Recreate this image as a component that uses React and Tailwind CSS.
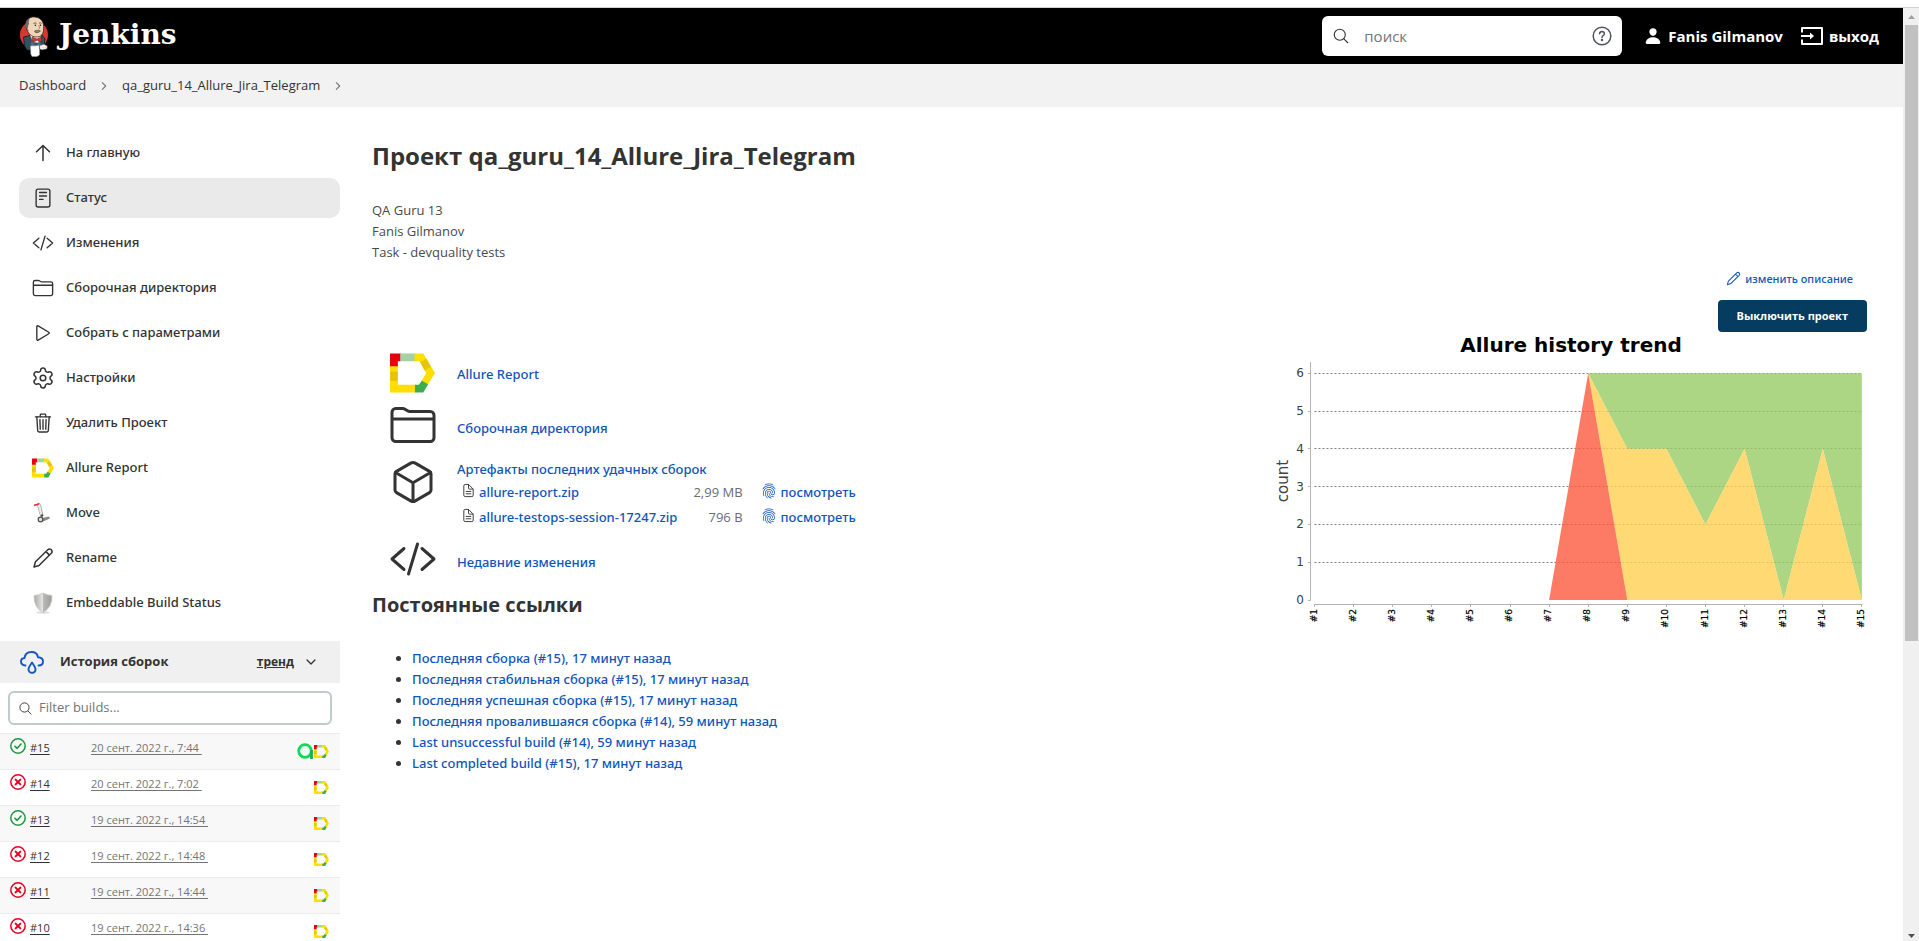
import React from 'react';
import {
  IoReaderOutline,
  IoCodeSlashOutline,
  IoFolderOutline,
  IoPlayOutline,
  IoTrashOutline,
  IoSearchOutline,
  IoCubeOutline,
  IoDocumentTextOutline,
  IoFingerPrintOutline,
  IoPerson,
  IoChevronForwardOutline,
  IoChevronDownOutline,
} from 'react-icons/io5';

function JenkinsLogo() {
  return (
    <svg viewBox="0 0 30 41" className="h-[41px] w-[30px]" aria-hidden="true">
      <circle cx="15" cy="19" r="14" fill="#d33833" />
      <path d="M4.500 21 L11 19.500 L23 19 L26 23 L25 30 L21 34 L8 34 L5.500 30 Z" fill="#335061" stroke="#161616" strokeWidth="0.800" />
      <path d="M11 19 L14 26 L20 27 L22 19 Z" fill="#fff" />
      <path d="M13 23 L16 28 L11 32 Z M20 24 L18 30 L23 31 Z" fill="#49728b" />
      <path d="M7.500 8 C7 3.500 11 0.800 15 0.900 C20 1 24 4 24.500 9 C25 14 24.500 19 20.500 20.500 C16 22 11 20 9.500 16.500 C8 15 6.800 12 7.500 8 Z" fill="#efd6b8" stroke="#30241c" strokeWidth="0.800" />
      <path d="M7.300 12 C5.800 8 6.500 3.500 11.500 1.400 C9.800 3.500 9.600 5.500 10 8 C8.800 9 9.400 11 8.600 13 Z" fill="#6d6b6d" />
      <path d="M8.800 11 C7.300 11.300 8 14.500 9.700 14.300" fill="#efd6b8" stroke="#30241c" strokeWidth="0.600" />
      <path d="M14.500 7.500 Q16 6.200 17.500 7.400 M20 7.200 Q21.500 6.200 22.500 7.500" fill="none" stroke="#30241c" strokeWidth="0.700" />
      <circle cx="16.400" cy="9.300" r="0.800" fill="#161616" />
      <circle cx="21.400" cy="9.300" r="0.800" fill="#161616" />
      <path d="M19.500 9.500 Q22 12.500 19.500 13.200" fill="none" stroke="#a06f54" strokeWidth="0.800" />
      <path d="M15.500 15 Q18.500 13.600 21.500 15 Q20 17 16.500 16.600 Z" fill="#8c8880" stroke="#30241c" strokeWidth="0.500" />
      <path d="M13 21 L18 23 L22.500 20.800 L22.500 26 L18 24.200 L14 26.500 Z" fill="#d33833" stroke="#6b120f" strokeWidth="0.500" />
      <path d="M11.500 30 L20.500 29.500 L20.500 39 L18 40.500 L13 40.500 L11.800 38 Z" fill="#fff" stroke="#9a9a9a" strokeWidth="0.500" />
      <path d="M20.500 29.500 L25 28 L28.500 30 L28 33 L23 34 L20.500 33 Z" fill="#f4efe8" stroke="#30241c" strokeWidth="0.500" />
    </svg>
  );
}

function AllureIcon({ className }) {
  return (
    <svg viewBox="0 0 46 40" className={className} aria-hidden="true">
      <path d="M0 12 H8 V32 H26 V40 H0 Z" fill="#ffde00" />
      <path d="M0 18.500 H8 V28 H0 Z" fill="#e5c40d" />
      <path d="M0 0 H11 V8 H8 V13 H0 Z" fill="#e8000e" />
      <path d="M10.500 0 H26 V8 H10.500 Z" fill="#a5d2a5" />
      <path d="M25 0 H34 L46 20 L38.500 32 L32 28.500 L37 20 L30 8 H25 Z" fill="#ffde00" />
      <path d="M31 9 L37 5.200 L42 13.500 L35.500 17.500 Z" fill="#e5c40d" />
      <path d="M25.500 32 H29.500 L32.500 28 L39 31.500 L34 40 H25.500 Z" fill="#3dac4b" />
    </svg>
  );
}

function ArrowUpIcon({ className }) {
  return (
    <svg viewBox="0 0 22 22" className={className} fill="none" stroke="currentColor" strokeWidth="1.500" strokeLinejoin="round" strokeLinecap="round" aria-hidden="true">
      <path d="M4.500 9.800 L11 3.500 L17.500 9.800 M11 3.800 V18.500" />
    </svg>
  );
}

function GearIcon({ className }) {
  return (
    <svg viewBox="1 1 22 22" className={className} fill="none" stroke="currentColor" strokeWidth="1.500" strokeLinejoin="round" strokeLinecap="round" aria-hidden="true">
      <path d="M9.671 4.136a2.34 2.34 0 0 1 4.659 0 2.34 2.34 0 0 0 3.319 1.915 2.34 2.34 0 0 1 2.33 4.033 2.34 2.34 0 0 0 0 3.831 2.34 2.34 0 0 1-2.33 4.033 2.34 2.34 0 0 0-3.319 1.915 2.34 2.34 0 0 1-4.659 0 2.34 2.34 0 0 0-3.32-1.915 2.34 2.34 0 0 1-2.33-4.033 2.34 2.34 0 0 0 0-3.831A2.34 2.34 0 0 1 6.35 6.051a2.34 2.34 0 0 0 3.319-1.915" />
      <circle cx="12" cy="12" r="2.800" />
    </svg>
  );
}

function PencilIcon({ className }) {
  return (
    <svg viewBox="0 0 22 22" className={className} fill="none" stroke="currentColor" strokeWidth="1.500" strokeLinejoin="round" strokeLinecap="round" aria-hidden="true">
      <path d="M2 20 L3.500 14.800 L15.800 2.800 Q17.500 1.200 19.300 2.800 Q20.900 4.600 19.300 6.300 L7 18.500 Z M14 4.600 L17.500 8.100" />
    </svg>
  );
}

function MoveIcon({ className }) {
  return (
    <svg viewBox="0 0 22 22" className={className} fill="none" aria-hidden="true">
      <path d="M5.500 3 L9.500 17 M8.500 2.500 L11 14" stroke="#9b9b98" strokeWidth="0.900" />
      <path d="M6.500 3 L10 15" stroke="#e9e9e6" strokeWidth="1.500" />
      <path d="M2 3.500 L4.500 2.500 M4 3 L7.500 1.500" stroke="#d9313d" strokeWidth="1.600" />
      <path d="M10 16 L17 14.500 L18 16.500 L11 19.500 Z" fill="#8b8b84" />
      <circle cx="8.500" cy="17.500" r="2.300" fill="#e2e2dd" stroke="#4b4b48" strokeWidth="1.200" />
      <circle cx="10" cy="13.500" r="1.200" fill="#4b4b48" />
    </svg>
  );
}

function ShieldIcon({ className }) {
  return (
    <svg viewBox="0 0 22 22" className={className} aria-hidden="true">
      <defs>
        <linearGradient id="shieldFill" x1="0" x2="1">
          <stop offset="0" stopColor="#a8aaa5" />
          <stop offset="0.480" stopColor="#e4e5e2" />
          <stop offset="0.520" stopColor="#b9bab6" />
          <stop offset="1" stopColor="#9a9c97" />
        </linearGradient>
      </defs>
      <ellipse cx="11" cy="20.500" rx="7" ry="1.200" fill="#dddddb" />
      <path d="M11 1 Q15.500 3.200 20 3.500 Q20.500 15 11 20.800 Q1.500 15 2 3.500 Q6.500 3.200 11 1 Z" fill="url(#shieldFill)" stroke="#c9cac7" strokeWidth="0.800" />
    </svg>
  );
}

function CloudIcon() {
  return (
    <svg viewBox="0 0 24 24" className="h-6 w-6" fill="none" stroke="#1457c4" strokeWidth="1.900" strokeLinecap="round" strokeLinejoin="round" aria-hidden="true">
      <path d="M5.500 15.500 C2.500 15.300 1 13.500 1 11.600 C1 9.600 2.500 8.200 4.600 8 C5 4 8 2 11.500 2 C14.800 2 17.400 4 18 7.200 C21 7.400 23 9 23 11.500 C23 14 21.200 15.500 18.500 15.500" />
      <path d="M12 12.500 C14 15.500 15.500 17.500 15.500 19.300 C15.500 21.400 14 22.800 12 22.800 C10 22.800 8.500 21.400 8.500 19.300 C8.500 17.500 10 15.500 12 12.500 Z" />
    </svg>
  );
}

function StatusIcon({ ok }) {
  return (
    <svg viewBox="0 0 16 16" className="h-4 w-4 shrink-0" fill="none" stroke={ok ? '#1e9641' : '#e2001f'} strokeWidth="1.500" strokeLinecap="round" strokeLinejoin="round" role="img" aria-label={ok ? 'Success' : 'Failed'}>
      <circle cx="8" cy="8" r="7.200" />
      {ok ? <path d="M5 8.300 L7.200 10.300 L11 6" strokeWidth="1.600" /> : <path d="M5.600 5.600 L10.400 10.400 M10.400 5.600 L5.600 10.400" strokeWidth="2" />}
    </svg>
  );
}

function TestOpsIcon() {
  return (
    <svg viewBox="0 0 17 17" className="h-[17px] w-[17px]" fill="none" stroke="#08dc5a" strokeWidth="2.800" aria-hidden="true">
      <circle cx="8" cy="8" r="6.300" />
      <path d="M14.500 7 V16" stroke="#12b34d" />
    </svg>
  );
}

const menu = [
  { label: 'На главную', Icon: ArrowUpIcon },
  { label: 'Статус', Icon: IoReaderOutline, active: true },
  { label: 'Изменения', Icon: IoCodeSlashOutline },
  { label: 'Сборочная директория', Icon: IoFolderOutline },
  { label: 'Собрать с параметрами', Icon: IoPlayOutline },
  { label: 'Настройки', Icon: GearIcon },
  { label: 'Удалить Проект', Icon: IoTrashOutline },
  { label: 'Allure Report', Icon: AllureIcon },
  { label: 'Move', Icon: MoveIcon },
  { label: 'Rename', Icon: PencilIcon },
  { label: 'Embeddable Build Status', Icon: ShieldIcon },
];

const builds = [
  { id: '#15', date: '20 сент. 2022 г., 7:44', ok: true, ops: true },
  { id: '#14', date: '20 сент. 2022 г., 7:02' },
  { id: '#13', date: '19 сент. 2022 г., 14:54', ok: true },
  { id: '#12', date: '19 сент. 2022 г., 14:48' },
  { id: '#11', date: '19 сент. 2022 г., 14:44' },
  { id: '#10', date: '19 сент. 2022 г., 14:36' },
];

const artifacts = [
  { name: 'allure-report.zip', size: '2,99 MB' },
  { name: 'allure-testops-session-17247.zip', size: '796 B' },
];

const permalinks = [
  'Последняя сборка (#15), 17 минут назад',
  'Последняя стабильная сборка (#15), 17 минут назад',
  'Последняя успешная сборка (#15), 17 минут назад',
  'Последняя провалившаяся сборка (#14), 59 минут назад',
  'Last unsuccessful build (#14), 59 минут назад',
  'Last completed build (#15), 17 минут назад',
];

function Header() {
  return (
    <header className="flex h-14 items-center justify-between bg-black pl-[19px] pr-6 text-white">
      <a href="#home" className="flex items-center gap-[10px]">
        <JenkinsLogo />
        <span className="pb-0.5 font-['DejaVu_Serif',serif] text-[28px] font-bold leading-9">Jenkins</span>
      </a>
      <div className="flex items-center">
        <label className="flex h-10 w-[300px] items-center rounded-md bg-white px-[10px] text-[#333]">
          <IoSearchOutline className="h-[18px] w-[18px]" />
          <input type="search" aria-label="поиск" placeholder="поиск" className="ml-[14px] min-w-0 flex-1 bg-transparent text-[15px] outline-none placeholder:text-[#757575]" />
          <svg viewBox="0 0 20 20" className="h-5 w-5" fill="none" stroke="#4d545d" strokeWidth="1.500" strokeLinecap="round" aria-hidden="true">
            <circle cx="10" cy="10" r="8.800" />
            <path d="M7.600 7.800 Q7.800 5.600 10 5.600 Q12.400 5.700 12.300 7.700 Q12.200 8.900 11 9.600 Q10 10.200 10 11.500" />
            <circle cx="10" cy="14.100" r="0.500" fill="#4d545d" />
          </svg>
        </label>
        <a href="#user" className="ml-[22px] flex items-center gap-[6px] text-[15px] font-bold">
          <IoPerson className="h-[18px] w-[18px]" />
          Fanis Gilmanov
        </a>
        <a href="#logout" className="ml-[17px] flex items-center gap-[5px] text-[15px] font-bold">
          <svg viewBox="0 0 24 20" className="h-5 w-6" fill="none" stroke="currentColor" strokeWidth="2" strokeLinejoin="round" aria-hidden="true">
            <path d="M2 6.500 V2 H22 V18 H2 V13.500 M1 10 H12" />
            <path d="M10 6.500 L14 10 L10 13.500 Z" fill="currentColor" stroke="none" />
          </svg>
          выход
        </a>
      </div>
    </header>
  );
}

function Sidebar() {
  return (
    <aside className="w-[340px] shrink-0 pt-[26px]">
      <nav className="flex flex-col gap-[5px] pl-[19px]">
        {menu.map(({ label, Icon, active }) => (
          <a
            key={label}
            href="#menu"
            className={
              active
                ? 'flex h-10 items-center gap-3 rounded-[10px] bg-[#eaeaea] pl-[13px]'
                : 'flex h-10 items-center gap-3 rounded-[10px] pl-[13px]'
            }
          >
            <Icon className="h-[22px] w-[22px] shrink-0" />
            <span className="font-['Noto_Sans',sans-serif] text-[13px] font-medium">{label}</span>
          </a>
        ))}
      </nav>
      <section className="mt-[18px]">
        <div className="flex h-[42px] items-center bg-[#f0f0f0] pl-5 pr-[22px] font-bold">
          <CloudIcon />
          <h2 className="ml-4 flex-1 text-[13px]">История сборок</h2>
          <a href="#trend" className="text-xs underline">тренд</a>
          <button type="button" aria-label="Свернуть" className="ml-[10px]">
            <IoChevronDownOutline className="h-[14px] w-[14px]" />
          </button>
        </div>
        <label className="mx-2 mt-2 flex h-[34px] items-center rounded-md border-2 border-[#bfc9ce] px-2">
          <IoSearchOutline className="h-[15px] w-[15px]" />
          <input type="search" aria-label="Filter builds" placeholder="Filter builds..." className="ml-[6px] min-w-0 flex-1 bg-transparent text-[13px] outline-none placeholder:text-[#757575]" />
        </label>
        <table className="mt-2 w-full border-collapse text-[11px]">
          <tbody>
            {builds.map((b) => (
              <tr key={b.id} className="h-9 border-t border-[#ececec] align-top odd:bg-[#f8f8f8]">
                <td className="w-[91px] pl-[10px] pt-1">
                  <span className="flex gap-1">
                    <StatusIcon ok={b.ok} />
                    <a href="#build" className="leading-5 underline underline-offset-2">{b.id}</a>
                  </span>
                </td>
                <td className="pt-1">
                  <a href="#build" className="block leading-5 whitespace-pre text-[#757575] underline underline-offset-2">{b.date + ' '}</a>
                </td>
                <td className="pr-[11px] pt-[9px]">
                  <span className="flex items-center justify-end">
                    {b.ops && <TestOpsIcon />}
                    <AllureIcon className="h-[17px] w-[15px]" />
                  </span>
                </td>
              </tr>
            ))}
          </tbody>
        </table>
      </section>
    </aside>
  );
}

const X0 = 47.5;
const STEP = 39.1;
const Y0 = 268;
const UNIT = 37.8;
const px = (build) => X0 + (build - 1) * STEP;
const py = (value) => Y0 - value * UNIT;
const points = (list) => list.map(([b, v]) => `${px(b)},${py(v)}`).join(' ');

function TrendChart() {
  return (
    <svg viewBox="0 0 600 300" className="h-[300px] w-[600px]" role="img" aria-label="Allure history trend">
      <g fontFamily="DejaVu Sans, sans-serif">
        <text x="304" y="20" textAnchor="middle" fontSize="20" fontWeight="700" fill="#000">Allure history trend</text>
        <g fontSize="12" fill="#404040" textAnchor="end">
          {[0, 1, 2, 3, 4, 5, 6].map((v) => (
            <text key={v} x="37" y={py(v) + 4}>{v}</text>
          ))}
        </g>
        <text transform="translate(21 149) rotate(-90)" textAnchor="middle" fontSize="15" fill="#404040">count</text>
        <g fontSize="9" textAnchor="end" fill="#000" stroke="#000" strokeWidth="0.2">
          {Array.from({ length: 15 }, (_, i) => (
            <text key={i} transform={`translate(${px(i + 1) + 2} 277) rotate(-90)`}>{'#' + (i + 1)}</text>
          ))}
        </g>
      </g>
      <g stroke="#808080" strokeDasharray="2 2">
        {[1, 2, 3, 4, 5, 6].map((v) => (
          <line key={v} x1={X0} x2={px(15)} y1={Math.floor(py(v)) + 0.5} y2={Math.floor(py(v)) + 0.5} />
        ))}
      </g>
      <polygon points={points([[8, 6], [15, 6], [15, 0], [14, 4], [13, 0], [12, 4], [11, 2], [10, 4], [9, 4]])} fill="#97cc64" fillOpacity="0.8" />
      <polygon points={points([[8, 6], [9, 4], [10, 4], [11, 2], [12, 4], [13, 0], [14, 4], [15, 0], [9, 0]])} fill="#ffd050" fillOpacity="0.8" />
      <polygon points={points([[7, 0], [8, 6], [9, 0]])} fill="#fd5a3e" fillOpacity="0.8" />
      <g stroke="#b4b4b4" fill="none">
        <path d="M43.500 30 V268.500" />
        <path d={`M${X0} 272.500 H${px(15) + 0.5}`} />
        {[0, 1, 2, 3, 4, 5, 6].map((v) => (
          <path key={v} d={`M41 ${Math.floor(py(v)) + 0.5} H43.5`} />
        ))}
        {Array.from({ length: 15 }, (_, i) => (
          <path key={i} d={`M${Math.floor(px(i + 1)) + 0.5} 272.5 V275`} />
        ))}
      </g>
    </svg>
  );
}

const LINK = "font-['Noto_Sans',sans-serif] text-[13px] leading-[21px] font-medium text-[#0f55bb]";

function Main() {
  return (
    <main className="min-w-0 flex-1 pl-8 pr-9 pt-8">
      <h1 className="text-2xl font-bold leading-[34px]">Проект qa_guru_14_Allure_Jira_Telegram</h1>
      <div className="mt-[27px] text-[13px] leading-[21px] text-[#4a4a4a]">
        <p>QA Guru 13</p>
        <p>Fanis Gilmanov</p>
        <p>Task - devquality tests</p>
      </div>
      <div className="mt-[5px] flex flex-col items-end gap-[11px]">
        <a href="#edit" className="mr-[14px] flex items-center gap-1 font-['Noto_Sans',sans-serif] text-[11px] font-medium leading-[21px] text-[#0f55bb]">
          <PencilIcon className="h-[15px] w-[15px]" />
          изменить описание
        </a>
        <button type="button" className="h-8 rounded bg-[#063c5f] px-[19px] text-[11px] font-bold text-white">Выключить проект</button>
      </div>
      <div className="flex justify-between">
        <div>
          <div className="flex flex-col gap-1 pl-[17px] pt-[17px]">
            <div className="flex h-12 items-center gap-5">
              <span className="w-12 pl-px"><AllureIcon className="h-10 w-[45px]" /></span>
              <a href="#allure" className={LINK + ' pt-[2px]'}>Allure Report</a>
            </div>
            <div className="flex h-12 items-center gap-5">
              <IoFolderOutline className="h-12 w-12" />
              <a href="#workspace" className={LINK + ' pt-[6px]'}>Сборочная директория</a>
            </div>
            <div className="flex gap-5 pb-px">
              <IoCubeOutline className="mt-[5px] h-12 w-12" />
              <div className="pt-[6px]">
                <a href="#artifacts" className={LINK + ' block'}>Артефакты последних удачных сборок</a>
                <table className="border-collapse">
                  <tbody>
                    {artifacts.map((a) => (
                      <tr key={a.name} className="h-[25px]">
                        <td className="pl-1">
                          <a href="#file" className={LINK + ' flex items-center gap-[3px]'}>
                            <IoDocumentTextOutline className="mb-1 h-[15px] w-[15px] text-[#333]" />
                            {a.name}
                          </a>
                        </td>
                        <td className="pl-4 text-right text-[13px] leading-[21px] text-[#6b6b73]">{a.size}</td>
                        <td className="pl-[18px]">
                          <a href="#fingerprint" className={LINK + ' flex items-center gap-1'}>
                            <IoFingerPrintOutline className="mb-1 h-4 w-4" />
                            посмотреть
                          </a>
                        </td>
                      </tr>
                    ))}
                  </tbody>
                </table>
              </div>
            </div>
            <div className="flex h-12 items-center gap-5">
              <IoCodeSlashOutline className="h-12 w-12" />
              <a href="#changes" className={LINK + ' pt-[6px]'}>Недавние изменения</a>
            </div>
          </div>
          <h2 className="mt-2 text-xl font-bold leading-7">Постоянные ссылки</h2>
          <ul className="mt-[29px] list-disc pl-10 font-['Noto_Sans',sans-serif] text-[13px] leading-[21px]">
            {permalinks.map((p) => (
              <li key={p}>
                <a href="#permalink" className={LINK}>{p}</a>
              </li>
            ))}
          </ul>
        </div>
        <TrendChart />
      </div>
    </main>
  );
}

function Scrollbar() {
  return (
    <div className="flex w-4 shrink-0 flex-col items-center bg-[#f0f0f0]" aria-hidden="true">
      <svg viewBox="0 0 16 17" className="h-[17px] w-4"><path d="M5 11 H12 L8.500 7 Z" fill="#a0a0a0" /></svg>
      <div className="w-full flex-1 pl-[2px] pr-px"><div className="h-[68%] bg-[#c1c1c1]" /></div>
      <svg viewBox="0 0 16 10" className="h-[10px] w-4"><path d="M5 3 H12 L8.500 7 Z" fill="#505050" /></svg>
    </div>
  );
}

export default function App() {
  return (
    <div className="flex h-screen flex-col overflow-hidden bg-white pt-[7px] font-['Open_Sans','Noto_Sans',sans-serif] text-[#333]">
      <div className="flex min-h-0 flex-1 border-t border-[#d0d0d0]">
        <div className="min-w-0 flex-1 overflow-hidden">
          <Header />
          <nav aria-label="breadcrumb" className="flex h-[43px] items-center bg-[#f2f2f2] pl-[19px] text-[13px]">
            <a href="#dashboard">Dashboard</a>
            <IoChevronForwardOutline className="mx-3 h-3 w-3 text-[#777]" />
            <a href="#project">qa_guru_14_Allure_Jira_Telegram</a>
            <IoChevronForwardOutline className="mx-3 h-3 w-3 text-[#777]" />
          </nav>
          <div className="flex">
            <Sidebar />
            <Main />
          </div>
        </div>
        <Scrollbar />
      </div>
    </div>
  );
}
